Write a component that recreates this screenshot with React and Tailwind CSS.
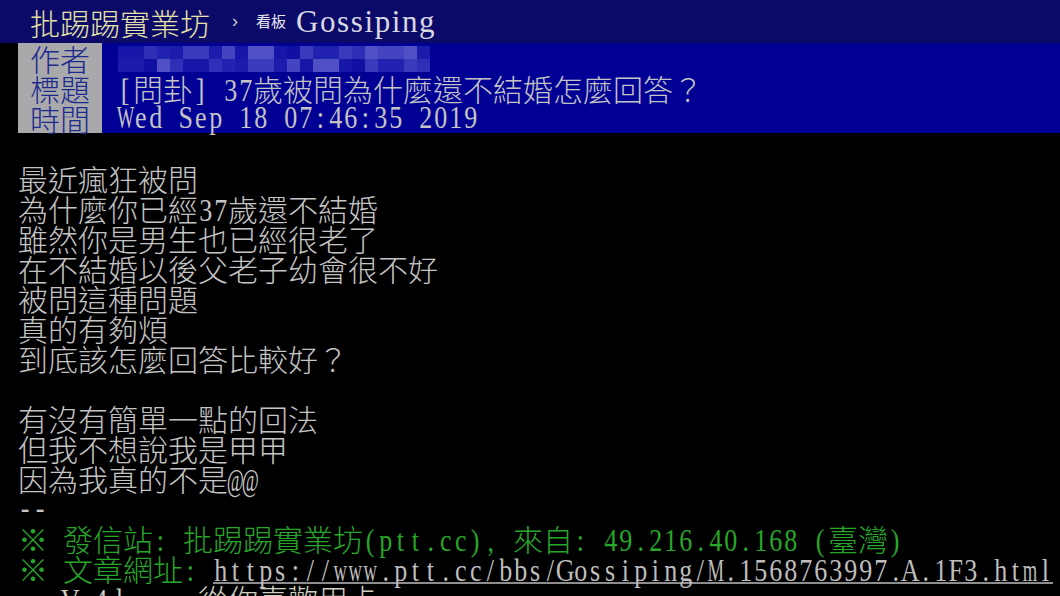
import React from 'react';

// PTT article view: terminal-like grid, 30px rows, CJK 30px / ASCII 15px cells

const cjk = "font-['Noto_Sans_CJK_TC','Noto_Sans_CJK_SC',sans-serif] font-light text-[30px]";
const wide = 'WMmw@%';

// one half-width cell per ascii char, serif glyph squeezed to fit
function Half({ ch }) {
  const squeeze = wide.includes(ch) ? 'scale-x-[0.6]' : 'scale-x-[0.84]';
  return (
    <span className="inline-flex justify-center w-[15px] whitespace-pre">
      <span className={`inline-block ${squeeze} font-['Liberation_Serif',serif] text-[31px]`}>{ch}</span>
    </span>
  );
}

function Txt({ text }) {
  const parts = text.split(/([\x00-\x7F]+)/).filter(Boolean);
  return parts.map((p, i) =>
    /^[\x00-\x7F]+$/.test(p) ? (
      <React.Fragment key={i}>
        {[...p].map((c, j) => <Half key={j} ch={c} />)}
      </React.Fragment>
    ) : (
      <span key={i} className={cjk}>{p}</span>
    )
  );
}

function Row({ children, className = '' }) {
  return (
    <div className={`h-[30px] leading-[30px] whitespace-pre ${className}`}>
      {children}
    </div>
  );
}

// blurred author name mosaic
function Mosaic() {
  const cols = 24;
  const rows = 2;
  const shades = ['#1616a8', '#2222b0', '#2e2eb6', '#3a3abc', '#4444c0', '#1c1cac', '#5050c4', '#1010a2'];
  const rects = [];
  for (let r = 0; r < rows; r++) {
    for (let c = 0; c < cols; c++) {
      const idx = (c * 7 + r * 5 + ((c * c) % 5)) % shades.length;
      rects.push(
        <rect key={`${r}-${c}`} x={c * 13} y={r * 13} width="13" height="13" fill={shades[idx]} />
      );
    }
  }
  return (
    <svg width="312" height="26" viewBox="0 0 312 26" className="block">
      {rects}
    </svg>
  );
}

const bodyLines = [
  '',
  '最近瘋狂被問',
  '為什麼你已經37歲還不結婚',
  '雖然你是男生也已經很老了',
  '在不結婚以後父老子幼會很不好',
  '被問這種問題',
  '真的有夠煩',
  '到底該怎麼回答比較好？',
  '',
  '有沒有簡單一點的回法',
  '但我不想說我是甲甲',
  '因為我真的不是@@',
  '--',
];

export default function App() {
  return (
    <div className="w-[1060px] h-[596px] overflow-hidden bg-black text-[#c4c4c4]">
      {/* top bar */}
      <div className="h-[43px] bg-[#0c0a68] flex items-center pl-[30px]">
        <span className={`${cjk} text-[#e4e2a4] leading-none`}>批踢踢實業坊</span>
        <span className="ml-[22px] text-[18px] text-[#c8c8d0] font-['Liberation_Sans',sans-serif]">›</span>
        <span className="ml-[18px] text-[15px] text-[#e8e8ee] font-['Noto_Sans_CJK_TC',sans-serif]">看板</span>
        <span className="ml-[10px] text-[31px] tracking-[1.6px] text-[#d8d8e2] font-['Liberation_Serif',serif] leading-none">
          Gossiping
        </span>
      </div>

      {/* article header */}
      <div className="flex">
        <div className="w-[18px] bg-black" />
        <div className="w-[84px] bg-[#a9a9ab] text-[#1c2a8e] flex flex-col items-center">
          <Row><Txt text="作者" /></Row>
          <Row><Txt text="標題" /></Row>
          <Row><Txt text="時間" /></Row>
        </div>
        <div className="flex-1 bg-[#000094] pl-[16px]">
          <div className="h-[30px] flex items-end pb-[1px]">
            <Mosaic />
          </div>
          <Row><Txt text="[問卦] 37歲被問為什麼還不結婚怎麼回答？" /></Row>
          <Row><Txt text="Wed Sep 18 07:46:35 2019" /></Row>
        </div>
      </div>

      {/* body */}
      <div className="pl-[18px]">
        {bodyLines.map((l, i) => (
          <Row key={i}><Txt text={l} /></Row>
        ))}
        <Row className="text-[#27a62a]">
          <Txt text="※ 發信站: 批踢踢實業坊(ptt.cc), 來自: 49.216.40.168 (臺灣)" />
        </Row>
        <Row>
          <span className="text-[#27a62a]"><Txt text="※ 文章網址: " /></span>
          <span className="inline-block h-[28px] leading-[30px] border-b-2 border-[#8e8e8e] text-[#bdbdbd]">
            <Txt text="https://www.ptt.cc/bbs/Gossiping/M.1568763997.A.1F3.html" />
          </span>
        </Row>
        <Row className="text-[#d0d0c0]">
          <Txt text="   Vr4dm    從你喜歡用卡" />
        </Row>
      </div>
    </div>
  );
}
